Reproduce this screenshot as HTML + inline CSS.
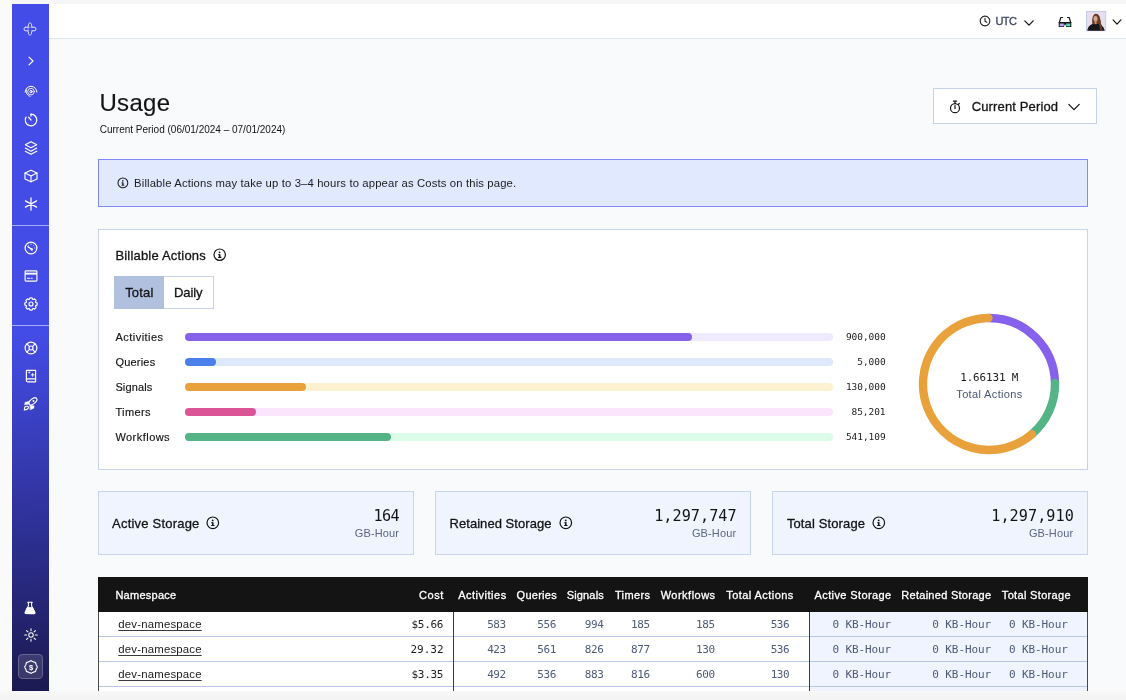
<!DOCTYPE html>
<html lang="en">
<head>
<meta charset="utf-8">
<title>Usage</title>
<style>
*{box-sizing:border-box;margin:0;padding:0}
html,body{width:1126px;height:700px;overflow:hidden}
body{background:#f8fafc;font-family:"Liberation Sans",sans-serif;color:#141414;position:relative}
.mono{font-family:"DejaVu Sans Mono","Liberation Mono",monospace}
#wrap{position:absolute;left:0;top:0;width:1126px;height:700px;will-change:transform}
.ic{position:absolute;overflow:visible}
.t{position:absolute;white-space:pre;line-height:1}
.md{-webkit-text-stroke:.3px currentColor}
.sm{-webkit-text-stroke:.15px currentColor}
#side{position:absolute;left:12px;top:4px;width:37px;height:687px;background:linear-gradient(176deg,#444ce7 0%,#444ce7 48%,#1b1950 100%)}
.sep{position:absolute;left:12px;width:37px;height:1px;background:#a9adf3}
#active{position:absolute;left:18.2px;top:654.2px;width:24.8px;height:24.6px;border-radius:4.5px;background:rgba(255,255,255,.13);border:1px solid rgba(255,255,255,.22)}
#top{position:absolute;left:49px;top:4px;width:1077px;height:35px;background:#fff;border-bottom:1px solid #e1e5ee}
#mt{position:absolute;left:0;top:0;width:1126px;height:4px;background:#f6f6f6}
#ml{position:absolute;left:0;top:0;width:12px;height:700px;background:#fafafa}
#mb{position:absolute;left:0;top:691px;width:1126px;height:9px;background:linear-gradient(#f8f8f8,#f3f3f3)}
#btn{position:absolute;left:933px;top:88px;width:164px;height:36px;background:#fff;border:1px solid #c5d2ea}
#banner{position:absolute;left:98px;top:159px;width:990px;height:48px;background:#e1e9ff;border:1px solid #7d8bf3}
#card{position:absolute;left:98px;top:229px;width:990px;height:241px;background:#fff;border:1px solid #c8d4ea}
#tabs{position:absolute;left:114px;top:276px;width:100px;height:33px;border:1px solid #c5d2ea;background:#fff}
#tabs i{position:absolute;left:-1px;top:-1px;width:50px;height:33px;background:#b1c0de}
.track{position:absolute;left:184.5px;width:648px;height:8px;border-radius:4px}
.fill{position:absolute;left:0;top:0;height:8px;border-radius:4px}
.scard{position:absolute;top:491px;width:316px;height:64px;background:#eff4fe;border:1px solid #c8d4ea}
#thead{position:absolute;left:98px;top:577px;width:990px;height:35px;background:#141414}
#tbody{position:absolute;left:98px;top:612px;width:990px;height:79px;background:#fff;border-left:1px solid #4a4a4a;border-right:1px solid #4a4a4a;overflow:hidden}
#stor{position:absolute;left:711px;top:0;width:279px;height:79px;background:#eff4fe}
.rl{position:absolute;left:0;width:990px;height:1px;background:#b7c6e4}
.vl{position:absolute;top:0;width:1px;height:79px;background:#3c3c3c}
.ns{text-decoration:underline;text-decoration-thickness:1px;text-decoration-color:#3a3a3a;text-underline-offset:1.5px;color:#1b1b1b}
.cost{right:682.4px;width:33.2px;overflow:hidden;text-align:right;direction:rtl;font-size:11px;color:#1b1b1b}
</style>
</head>
<body>
<div id="wrap">
<div id="mt"></div><div id="ml"></div><div id="mb"></div>
<div id="side"></div>
<div class="sep" style="top:225px"></div><div class="sep" style="top:325px"></div>
<div id="active"></div>
<svg class="ic" style="left:22.45px;top:21.10px" width="16" height="16" viewBox="-8.0 -8.0 16 16" fill="none" stroke="#fff" stroke-width="1.0" stroke-linecap="round" stroke-linejoin="round" ><ellipse rx="2.0" ry="6.2"/><rect x="-5.95" y="-1.75" width="11.9" height="3.5" rx="1.75" ry="1.75"/><ellipse rx="1.5" ry="5.7" fill="#444ce7" stroke="none"/><rect x="-5.45" y="-1.25" width="10.9" height="2.5" rx="1.25" fill="#444ce7" stroke="none"/><path d="M-1.9 -1.5C-2.1 -0.5 -2.1 0.5 -1.9 1.5M-1.6 -1.7H1.6" stroke-width="0.5" opacity=".75"/></svg>
<svg class="ic" style="left:23.40px;top:52.50px" width="16" height="16" viewBox="-8.0 -8.0 16 16" fill="none" stroke="#fff" stroke-width="1.1" stroke-linecap="round" stroke-linejoin="round" ><path d="M-2.0 -3.8L2.0 0L-2.0 3.8"/></svg>
<svg class="ic" style="left:22.60px;top:83.00px" width="16" height="16" viewBox="-8.0 -8.0 16 16" fill="none" stroke="#fff" stroke-width="1.0" stroke-linecap="round" stroke-linejoin="round" ><circle cy="0.6" r="1.15" stroke-width="1.0"/><circle cy="0.6" r="3.3" stroke-width="0.85"/><path d="M-0.85 5.43A4.9 4.9 0 0 1 -4.60 -1.08" stroke-width="0.85"/><path d="M-5.9 1.2A5.9 5.9 0 0 1 5.9 1.2" stroke-width="1.0"/></svg>
<svg class="ic" style="left:22.60px;top:111.80px" width="16" height="16" viewBox="-8.0 -8.0 16 16" fill="none" stroke="#fff" stroke-width="1.25" stroke-linecap="round" stroke-linejoin="round" ><path d="M0.00 -5.80A5.8 5.8 0 1 1 -5.02 -2.90"/><path d="M0 -5.8V-4.0"/><path d="M0 0L-2.5 -2.8"/></svg>
<svg class="ic" style="left:22.60px;top:139.60px" width="16" height="16" viewBox="-8.0 -8.0 16 16" fill="none" stroke="#fff" stroke-width="1.15" stroke-linecap="round" stroke-linejoin="round" ><path d="M0 -6.3L5.7 -3.2L0 -0.2L-5.7 -3.2Z"/><path d="M-5.7 0.1L0 3.2L5.7 0.1"/><path d="M-5.7 3.2L0 6.3L5.7 3.2"/></svg>
<svg class="ic" style="left:22.60px;top:167.80px" width="16" height="16" viewBox="-8.0 -8.0 16 16" fill="none" stroke="#fff" stroke-width="1.15" stroke-linecap="round" stroke-linejoin="round" ><path d="M0 -5.8L6 -3V3L0 5.8L-6 3V-3Z"/><path d="M-6 -3L0 -0.1L6 -3M0 -0.1V5.8"/></svg>
<svg class="ic" style="left:22.60px;top:195.80px" width="16" height="16" viewBox="-8.0 -8.0 16 16" fill="none" stroke="#fff" stroke-width="1.25" stroke-linecap="round" stroke-linejoin="round" ><path d="M0 -6.2V6.2M-5.6 -3.1L5.6 3.1M-5.6 3.1L5.6 -3.1"/></svg>
<svg class="ic" style="left:22.60px;top:239.80px" width="16" height="16" viewBox="-8.0 -8.0 16 16" fill="none" stroke="#fff" stroke-width="1.2" stroke-linecap="round" stroke-linejoin="round" ><circle r="5.9"/><path d="M0.9 1.5L-3.0 -1.3" stroke-width="1.4"/><circle cx="0.8" cy="1.5" r="1.15" fill="#fff" stroke="none"/><path d="M0 -3.9V-3.7M2.7 -2.8L2.6 -2.7M3.9 0H3.7M-2.7 -2.8L-2.6 -2.7" stroke-width="1"/></svg>
<svg class="ic" style="left:22.60px;top:267.80px" width="16" height="16" viewBox="-8.0 -8.0 16 16" fill="none" stroke="#fff" stroke-width="1.15" stroke-linecap="round" stroke-linejoin="round" ><rect x="-5.9" y="-5.1" width="11.8" height="10.2" rx="0.8"/><rect x="-5.9" y="-3.3" width="11.8" height="1.9" fill="#fff" stroke="none"/><path d="M-3.6 2.3H-1.4M0.2 2.3H1.2" stroke-width="1.1"/></svg>
<svg class="ic" style="left:22.60px;top:296.00px" width="16" height="16" viewBox="-8.0 -8.0 16 16" fill="none" stroke="#fff" stroke-width="1.15" stroke-linecap="round" stroke-linejoin="round" ><path d="M-1.55 -4.76L-1.09 -6.16L1.09 -6.16L1.55 -4.76L2.27 -4.46L3.58 -5.12L5.12 -3.58L4.46 -2.27L4.76 -1.55L6.16 -1.09L6.16 1.09L4.76 1.55L4.46 2.27L5.12 3.58L3.58 5.12L2.27 4.46L1.55 4.76L1.09 6.16L-1.09 6.16L-1.55 4.76L-2.27 4.46L-3.58 5.12L-5.12 3.58L-4.46 2.27L-4.76 1.55L-6.16 1.09L-6.16 -1.09L-4.76 -1.55L-4.46 -2.27L-5.12 -3.58L-3.58 -5.12L-2.27 -4.46Z"/><circle r="2"/></svg>
<svg class="ic" style="left:22.60px;top:339.80px" width="16" height="16" viewBox="-8.0 -8.0 16 16" fill="none" stroke="#fff" stroke-width="1.2" stroke-linecap="round" stroke-linejoin="round" ><circle r="5.9"/><circle r="2.0"/><path d="M-4.17 -4.17L-1.41 -1.41M4.17 -4.17L1.41 -1.41M-4.17 4.17L-1.41 1.41M4.17 4.17L1.41 1.41"/></svg>
<svg class="ic" style="left:22.60px;top:368.00px" width="16" height="16" viewBox="-8.0 -8.0 16 16" fill="none" stroke="#fff" stroke-width="1.15" stroke-linecap="round" stroke-linejoin="round" ><path d="M-4.6 -5.7H4.6V5.8H-3.2A1.4 1.4 0 0 1 -4.6 4.4Z"/><path d="M-4.6 4.3A1.4 1.4 0 0 1 -3.2 2.9H4.6" /><path d="M1.7 -2.5V0.3M0.3 -1.1H3.1" stroke-width="0.95"/><path d="M-1.7 -4.1V-3M-2.25 -3.55H-1.15" stroke-width="0.8"/></svg>
<svg class="ic" style="left:23.00px;top:396.00px" width="16" height="16" viewBox="-8.0 -8.0 16 16" fill="none" stroke="#fff" stroke-width="1" stroke-linecap="round" stroke-linejoin="round" ><path d="M-5.7 -1.7L-1.2 -2.8L-1.6 0L-6.3 0.7Z" fill="#fff" stroke-width="0.5"/><path d="M-0.9 1.3L3.2 1.9L2.7 4.3L-0.6 5.8Z" fill="#fff" stroke-width="0.5"/><ellipse cx="2.0" cy="-2.7" rx="4.6" ry="2.45" transform="rotate(-40 2.0 -2.7)" fill="#3c42c9" stroke-width="1.15"/><circle cx="2.5" cy="-2.9" r="1.0" fill="#fff" stroke="none"/><path d="M-6.7 5.9L-6.2 3C-5 1.9 -3 2 -2.5 2.9C-2.1 4.5 -4 5.9 -6.7 5.9Z" fill="#3c42c9" stroke-width="1.1"/></svg>
<svg class="ic" style="left:22.45px;top:599.50px" width="16" height="16" viewBox="-8.0 -8.0 16 16" fill="none" stroke="#fff" stroke-width="1.1" stroke-linecap="round" stroke-linejoin="round" ><path d="M-2.3 -5.8H2.3" stroke-width="1.15"/><path d="M-1.6 -5.8V-1.9L-4.8 4.3A0.9 0.9 0 0 0 -4 5.6H4A0.9 0.9 0 0 0 4.8 4.3L1.6 -1.9V-5.8" stroke-width="1.05"/><path d="M-2.5 -0.4H2.5L4.8 4.3A0.9 0.9 0 0 1 4 5.6H-4A0.9 0.9 0 0 1 -4.8 4.3Z" fill="#fff" stroke-width="0.8"/></svg>
<svg class="ic" style="left:22.60px;top:627.40px" width="16" height="16" viewBox="-8.0 -8.0 16 16" fill="none" stroke="#fff" stroke-width="1.05" stroke-linecap="round" stroke-linejoin="round" ><circle r="2.2" stroke-width="1.1"/><path d="M4.30 0.00L6.30 0.00M3.04 3.04L4.45 4.45M0.00 4.30L0.00 6.30M-3.04 3.04L-4.45 4.45M-4.30 0.00L-6.30 0.00M-3.04 -3.04L-4.45 -4.45M-0.00 -4.30L-0.00 -6.30M3.04 -3.04L4.45 -4.45"/></svg>
<svg class="ic" style="left:22.60px;top:658.50px" width="16" height="16" viewBox="-8.0 -8.0 16 16" fill="none" stroke="#fff" stroke-width="1.15" stroke-linecap="round" stroke-linejoin="round" ><path d="M6.30 0.00L6.13 0.40L5.95 0.78L5.76 1.15L5.58 1.50L5.42 1.84L5.27 2.18L5.13 2.53L5.01 2.89L4.89 3.26L4.76 3.65L4.62 4.05L4.45 4.45L4.05 4.62L3.65 4.76L3.26 4.89L2.89 5.01L2.53 5.13L2.18 5.27L1.84 5.42L1.50 5.58L1.15 5.76L0.78 5.95L0.40 6.13L0.00 6.30L-0.40 6.13L-0.78 5.95L-1.15 5.76L-1.50 5.58L-1.84 5.42L-2.18 5.27L-2.53 5.13L-2.89 5.01L-3.26 4.89L-3.65 4.76L-4.05 4.62L-4.45 4.45L-4.62 4.05L-4.76 3.65L-4.89 3.26L-5.01 2.89L-5.13 2.53L-5.27 2.18L-5.42 1.84L-5.58 1.50L-5.76 1.15L-5.95 0.78L-6.13 0.40L-6.30 0.00L-6.13 -0.40L-5.95 -0.78L-5.76 -1.15L-5.58 -1.50L-5.42 -1.84L-5.27 -2.18L-5.13 -2.53L-5.01 -2.89L-4.89 -3.26L-4.76 -3.65L-4.62 -4.05L-4.45 -4.45L-4.05 -4.62L-3.65 -4.76L-3.26 -4.89L-2.89 -5.01L-2.53 -5.13L-2.18 -5.27L-1.84 -5.42L-1.50 -5.58L-1.15 -5.76L-0.78 -5.95L-0.40 -6.13L-0.00 -6.30L0.40 -6.13L0.78 -5.95L1.15 -5.76L1.50 -5.58L1.84 -5.42L2.18 -5.27L2.53 -5.13L2.89 -5.01L3.26 -4.89L3.65 -4.76L4.05 -4.62L4.45 -4.45L4.62 -4.05L4.76 -3.65L4.89 -3.26L5.01 -2.89L5.13 -2.53L5.27 -2.18L5.42 -1.84L5.58 -1.50L5.76 -1.15L5.95 -0.78L6.13 -0.40L6.30 -0.00Z"/><text x="0" y="2.75" text-anchor="middle" font-family="Liberation Sans, sans-serif" font-size="7.6" font-weight="700" fill="#fff" stroke="none">$</text></svg>
<div id="top"></div>
<svg class="ic" style="left:976.5px;top:13.4px" width="16" height="16" viewBox="-8 -8 16 16" fill="none" stroke="#1f1f1f" stroke-width="1.1" stroke-linecap="round" stroke-linejoin="round"><circle r="4.85"/><path d="M0 -2.8V0.2L1.9 1.3"/></svg>
<div class="t md" style="left:995.50px;top:16.0px;font-size:11px;letter-spacing:-0.613px;color:#3c4663;">UTC</div>
<svg class="ic" style="left:1021.0999999999999px;top:14.5px" width="16" height="16" viewBox="-8 -8 16 16" fill="none" stroke="#141414" stroke-width="1.25" stroke-linecap="round" stroke-linejoin="round"><path d="M-4.2 -2.15L0 2.15L4.2 -2.15"/></svg>
<svg class="ic" style="left:1057.15px;top:13.9px" width="16" height="16" viewBox="-8 -8 16 16" fill="none" stroke="#141414" stroke-width="1.2" stroke-linejoin="round" stroke-linecap="round"><path d="M-2.5 -4.5H-4.2L-5.7 0.6M2.5 -4.5H4.2L5.7 0.6"/><path d="M-6.3 0H6.3V5H1L0.5 2.6H-0.5L-1 5H-6.3Z" fill="#141414" stroke="none"/><rect x="-5.3" y="1.5" width="4.1" height="2.8" fill="#b7a2f6" stroke="none"/><rect x="1.2" y="1.5" width="4.1" height="2.8" fill="#56d3bd" stroke="none"/></svg>
<svg class="ic" style="left:1086px;top:11.2px" width="20.2" height="20.2" viewBox="0 0 21 21"><rect x="0.5" y="0.5" width="20" height="20" fill="#e6deef" stroke="#c3cce6"/><path d="M6.6 13.2C6 8 7 3 10.2 2.8C13.6 2.8 14.6 6.5 15 10C15.4 13.5 16.6 16.5 17 20H5.4C5.8 17.5 6.9 16 6.6 13.2Z" fill="#6a3d28"/><ellipse cx="9.9" cy="8" rx="2.1" ry="2.9" fill="#d8a88b"/><rect x="9" y="10" width="2" height="3.4" fill="#c99678"/><path d="M1.4 20.5C1.8 16 4.6 13.9 8.2 13.2C9.4 14.2 10.8 14.2 11.8 13.2C15.4 13.9 18.8 16 19.4 20.5Z" fill="#17181c"/><path d="M12 5.5C13.2 8 12.8 11 13.6 14C14.2 16.4 14.4 18.4 14.6 20.3H17C16.6 16.5 15.4 13.5 15 10C14.8 8 14.2 6 13 4.6Z" fill="#6a3d28"/></svg>
<svg class="ic" style="left:1108.6px;top:14.2px" width="16" height="16" viewBox="-8 -8 16 16" fill="none" stroke="#141414" stroke-width="1.2" stroke-linecap="round" stroke-linejoin="round"><path d="M-3.9 -2.05L0 2.05L3.9 -2.05"/></svg>
<div class="t sm" style="left:99.50px;top:91.2px;font-size:24px;letter-spacing:0.281px;">Usage</div>
<div class="t" style="left:99.70px;top:124.6px;font-size:10px;">Current Period (06/01/2024 – 07/01/2024)</div>
<div id="btn"></div>
<svg class="ic" style="left:947.1px;top:98.5px" width="16" height="16" viewBox="-8 -8 16 16" fill="none" stroke="#1a1a1a" stroke-width="1.25" stroke-linecap="round" stroke-linejoin="round"><circle cy="1.2" r="4.5"/><path d="M-1.6 -6H1.6M0 -5.8V-3.4M0 -1.4V1.4M3.4 -2.6L4.3 -3.5"/></svg>
<div class="t md" style="left:971.70px;top:100.2px;font-size:13px;letter-spacing:0.138px;">Current Period</div>
<svg class="ic" style="left:1066.3px;top:99.1px" width="16" height="16" viewBox="-8 -8 16 16" fill="none" stroke="#141414" stroke-width="1.3" stroke-linecap="round" stroke-linejoin="round"><path d="M-5.2 -2.6L0 2.6L5.2 -2.6"/></svg>
<div id="banner"></div>
<svg class="ic" style="left:116.10px;top:176.30px" width="13.8" height="13.8" viewBox="-6.9 -6.9 13.8 13.8" fill="none" stroke="#1a1a1a" stroke-width="1.05" stroke-linecap="round"><circle r="4.9"/><g transform="scale(0.860)"><path d="M0 -0.5V2.7" stroke-width="1.5" stroke-linecap="butt"/><path d="M-1.6 0H0M-1.6 2.7H1.7" stroke-width="1.05" stroke-linecap="butt"/><circle cx="-0.1" cy="-2.35" r="0.9" fill="#1a1a1a" stroke="none"/></g></svg>
<div class="t" style="left:134.10px;top:177.5px;font-size:11.3px;letter-spacing:0.132px;color:#1c1c1c;">Billable Actions may take up to 3–4 hours to appear as Costs on this page.</div>
<div id="card"></div>
<div class="t md" style="left:115.40px;top:248.9px;font-size:13px;letter-spacing:0.193px;">Billable Actions</div>
<svg class="ic" style="left:212.00px;top:247.10px" width="15.4" height="15.4" viewBox="-7.7 -7.7 15.4 15.4" fill="none" stroke="#141414" stroke-width="1.2" stroke-linecap="round"><circle r="5.7"/><g transform="scale(1.000)"><path d="M0 -0.5V2.7" stroke-width="1.5" stroke-linecap="butt"/><path d="M-1.6 0H0M-1.6 2.7H1.7" stroke-width="1.05" stroke-linecap="butt"/><circle cx="-0.1" cy="-2.35" r="0.9" fill="#141414" stroke="none"/></g></svg>
<div id="tabs"><i></i></div>
<div class="t md" style="left:125.20px;top:285.8px;font-size:13px;letter-spacing:0.175px;">Total</div>
<div class="t md" style="left:174.00px;top:285.8px;font-size:13px;letter-spacing:-0.119px;">Daily</div>
<div class="t sm" style="left:115.40px;top:332.0px;font-size:11px;letter-spacing:0.481px;">Activities</div><div class="track" style="top:333px;background:#efeafd"><div class="fill" style="width:507.7px;background:#8561ec"></div></div><div class="t mono" style="left:845.90px;top:332.0px;font-size:9.5px;color:#1c1c1c;letter-spacing:-.05px;">900,000</div>
<div class="t sm" style="left:115.40px;top:357.0px;font-size:11px;letter-spacing:0.217px;">Queries</div><div class="track" style="top:358px;background:#dde8fb"><div class="fill" style="width:31.2px;background:#4b80ea"></div></div><div class="t mono" style="left:857.27px;top:357.0px;font-size:9.5px;color:#1c1c1c;letter-spacing:-.05px;">5,000</div>
<div class="t sm" style="left:115.40px;top:382.0px;font-size:11px;letter-spacing:0.146px;">Signals</div><div class="track" style="top:383px;background:#fdf2cf"><div class="fill" style="width:121.7px;background:#e8a13b"></div></div><div class="t mono" style="left:845.90px;top:382.0px;font-size:9.5px;color:#1c1c1c;letter-spacing:-.05px;">130,000</div>
<div class="t sm" style="left:115.40px;top:407.0px;font-size:11px;letter-spacing:0.370px;">Timers</div><div class="track" style="top:408px;background:#fbe5fc"><div class="fill" style="width:71.7px;background:#db5496"></div></div><div class="t mono" style="left:851.52px;top:407.0px;font-size:9.5px;color:#1c1c1c;letter-spacing:-.05px;">85,201</div>
<div class="t sm" style="left:115.40px;top:432.0px;font-size:11px;letter-spacing:0.462px;">Workflows</div><div class="track" style="top:433px;background:#dcfcea"><div class="fill" style="width:206.3px;background:#54b486"></div></div><div class="t mono" style="left:845.90px;top:432.0px;font-size:9.5px;color:#1c1c1c;letter-spacing:-.05px;">541,109</div>

<svg class="ic" style="left:909.2px;top:303.8px" width="160" height="160" viewBox="-80 -80 160 160" fill="none" stroke-width="8.4" stroke-linecap="round"><path d="M0.00 -66.00A66 66 0 0 1 65.99 -1.15" stroke="#8561ec"/><path d="M65.99 -1.15A66 66 0 0 1 42.86 50.19" stroke="#54b486"/><path d="M42.86 50.19A66 66 0 1 1 -0.58 -66.00" stroke="#e8a13b"/></svg>
<div class="t mono" style="left:960.20px;top:373.2px;font-size:10.9px;letter-spacing:-0.100px;color:#1c1c1c;">1.66131 M</div>
<div class="t" style="left:956.30px;top:389.0px;font-size:11px;letter-spacing:0.354px;color:#4a5574;">Total Actions</div>
<div class="scard" style="left:98px"></div><div class="t md" style="left:112.10px;top:517.0px;font-size:13px;letter-spacing:0.208px;">Active Storage</div><svg class="ic" style="left:204.70px;top:515.20px" width="15.6" height="15.6" viewBox="-7.8 -7.8 15.6 15.6" fill="none" stroke="#141414" stroke-width="1.2" stroke-linecap="round"><circle r="5.8"/><g transform="scale(1.018)"><path d="M0 -0.5V2.7" stroke-width="1.5" stroke-linecap="butt"/><path d="M-1.6 0H0M-1.6 2.7H1.7" stroke-width="1.05" stroke-linecap="butt"/><circle cx="-0.1" cy="-2.35" r="0.9" fill="#141414" stroke="none"/></g></svg><div class="t mono" style="left:373.60px;top:509.3px;font-size:15.2px;letter-spacing:-0.700px;">164</div><div class="t" style="left:354.70px;top:528.2px;font-size:11px;letter-spacing:0.154px;color:#5a6684;">GB-Hour</div>
<div class="scard" style="left:435px"></div><div class="t md" style="left:449.50px;top:517.0px;font-size:13px;letter-spacing:0.050px;">Retained Storage</div><svg class="ic" style="left:557.55px;top:515.20px" width="15.6" height="15.6" viewBox="-7.8 -7.8 15.6 15.6" fill="none" stroke="#141414" stroke-width="1.2" stroke-linecap="round"><circle r="5.8"/><g transform="scale(1.018)"><path d="M0 -0.5V2.7" stroke-width="1.5" stroke-linecap="butt"/><path d="M-1.6 0H0M-1.6 2.7H1.7" stroke-width="1.05" stroke-linecap="butt"/><circle cx="-0.1" cy="-2.35" r="0.9" fill="#141414" stroke="none"/></g></svg><div class="t mono" style="left:654.20px;top:509.3px;font-size:15.2px;letter-spacing:0.016px;">1,297,747</div><div class="t" style="left:691.90px;top:528.2px;font-size:11px;letter-spacing:0.138px;color:#5a6684;">GB-Hour</div>
<div class="scard" style="left:772px"></div><div class="t md" style="left:786.90px;top:517.0px;font-size:13px;letter-spacing:0.123px;">Total Storage</div><svg class="ic" style="left:870.90px;top:515.20px" width="15.6" height="15.6" viewBox="-7.8 -7.8 15.6 15.6" fill="none" stroke="#141414" stroke-width="1.2" stroke-linecap="round"><circle r="5.8"/><g transform="scale(1.018)"><path d="M0 -0.5V2.7" stroke-width="1.5" stroke-linecap="butt"/><path d="M-1.6 0H0M-1.6 2.7H1.7" stroke-width="1.05" stroke-linecap="butt"/><circle cx="-0.1" cy="-2.35" r="0.9" fill="#141414" stroke="none"/></g></svg><div class="t mono" style="left:991.20px;top:509.3px;font-size:15.2px;letter-spacing:0.053px;">1,297,910</div><div class="t" style="left:1028.90px;top:528.2px;font-size:11px;letter-spacing:0.137px;color:#5a6684;">GB-Hour</div>

<div id="thead"></div><div class="t md" style="left:115.40px;top:589.7px;font-size:11px;letter-spacing:0.269px;color:#fff;">Namespace</div><div class="t md" style="left:419.00px;top:589.7px;font-size:11px;letter-spacing:0.558px;color:#fff;">Cost</div><div class="t md" style="left:458.20px;top:589.7px;font-size:11px;letter-spacing:0.514px;color:#fff;">Activities</div><div class="t md" style="left:516.60px;top:589.7px;font-size:11px;letter-spacing:0.267px;color:#fff;">Queries</div><div class="t md" style="left:566.70px;top:589.7px;font-size:11px;letter-spacing:0.162px;color:#fff;">Signals</div><div class="t md" style="left:614.90px;top:589.7px;font-size:11px;letter-spacing:0.390px;color:#fff;">Timers</div><div class="t md" style="left:660.70px;top:589.7px;font-size:11px;letter-spacing:0.487px;color:#fff;">Workflows</div><div class="t md" style="left:726.20px;top:589.7px;font-size:11px;letter-spacing:0.446px;color:#fff;">Total Actions</div><div class="t md" style="left:814.50px;top:589.7px;font-size:11px;letter-spacing:0.400px;color:#fff;">Active Storage</div><div class="t md" style="left:901.30px;top:589.7px;font-size:11px;letter-spacing:0.278px;color:#fff;">Retained Storage</div><div class="t md" style="left:1001.80px;top:589.7px;font-size:11px;letter-spacing:0.335px;color:#fff;">Total Storage</div>
<div id="tbody"><div id="stor"></div><div class="rl" style="top:24px"></div><div class="rl" style="top:49px"></div><div class="rl" style="top:74px"></div><div class="rl" style="top:99px"></div><div class="vl" style="left:354px"></div><div class="vl" style="left:710px"></div></div>
<div class="t ns" style="left:118.30px;top:619.4px;font-size:11.4px;letter-spacing:0.181px;">dev-namespace</div><div class="t mono" style="left:411.50px;top:618.7px;font-size:11px;letter-spacing:-0.281px;color:#1b1b1b;">$5.66</div><div class="t mono" style="left:487.20px;top:618.7px;font-size:11px;letter-spacing:-0.438px;color:#4e5a79;">583</div><div class="t mono" style="left:537.30px;top:618.7px;font-size:11px;letter-spacing:-0.438px;color:#4e5a79;">556</div><div class="t mono" style="left:584.80px;top:618.7px;font-size:11px;letter-spacing:-0.438px;color:#4e5a79;">994</div><div class="t mono" style="left:631.10px;top:618.7px;font-size:11px;letter-spacing:-0.438px;color:#4e5a79;">185</div><div class="t mono" style="left:696.10px;top:618.7px;font-size:11px;letter-spacing:-0.438px;color:#4e5a79;">185</div><div class="t mono" style="left:770.70px;top:618.7px;font-size:11px;letter-spacing:-0.438px;color:#4e5a79;">536</div><div class="t mono" style="left:832.40px;top:618.7px;font-size:11px;letter-spacing:-0.103px;color:#4e5a79;">0 KB-Hour</div><div class="t mono" style="left:932.30px;top:618.7px;font-size:11px;letter-spacing:-0.103px;color:#4e5a79;">0 KB-Hour</div><div class="t mono" style="left:1009.00px;top:618.7px;font-size:11px;letter-spacing:-0.103px;color:#4e5a79;">0 KB-Hour</div>
<div class="t ns" style="left:118.30px;top:644.4px;font-size:11.4px;letter-spacing:0.181px;">dev-namespace</div><div class="t mono cost" style="top:643.7px">$29.32</div><div class="t mono" style="left:487.20px;top:643.7px;font-size:11px;letter-spacing:-0.438px;color:#4e5a79;">423</div><div class="t mono" style="left:537.30px;top:643.7px;font-size:11px;letter-spacing:-0.438px;color:#4e5a79;">561</div><div class="t mono" style="left:584.80px;top:643.7px;font-size:11px;letter-spacing:-0.438px;color:#4e5a79;">826</div><div class="t mono" style="left:631.10px;top:643.7px;font-size:11px;letter-spacing:-0.438px;color:#4e5a79;">877</div><div class="t mono" style="left:696.10px;top:643.7px;font-size:11px;letter-spacing:-0.438px;color:#4e5a79;">130</div><div class="t mono" style="left:770.70px;top:643.7px;font-size:11px;letter-spacing:-0.438px;color:#4e5a79;">536</div><div class="t mono" style="left:832.40px;top:643.7px;font-size:11px;letter-spacing:-0.103px;color:#4e5a79;">0 KB-Hour</div><div class="t mono" style="left:932.30px;top:643.7px;font-size:11px;letter-spacing:-0.103px;color:#4e5a79;">0 KB-Hour</div><div class="t mono" style="left:1009.00px;top:643.7px;font-size:11px;letter-spacing:-0.103px;color:#4e5a79;">0 KB-Hour</div>
<div class="t ns" style="left:118.30px;top:669.4px;font-size:11.4px;letter-spacing:0.181px;">dev-namespace</div><div class="t mono" style="left:411.50px;top:668.7px;font-size:11px;letter-spacing:-0.281px;color:#1b1b1b;">$3.35</div><div class="t mono" style="left:487.20px;top:668.7px;font-size:11px;letter-spacing:-0.438px;color:#4e5a79;">492</div><div class="t mono" style="left:537.30px;top:668.7px;font-size:11px;letter-spacing:-0.438px;color:#4e5a79;">536</div><div class="t mono" style="left:584.80px;top:668.7px;font-size:11px;letter-spacing:-0.438px;color:#4e5a79;">883</div><div class="t mono" style="left:631.10px;top:668.7px;font-size:11px;letter-spacing:-0.438px;color:#4e5a79;">816</div><div class="t mono" style="left:696.10px;top:668.7px;font-size:11px;letter-spacing:-0.438px;color:#4e5a79;">600</div><div class="t mono" style="left:770.70px;top:668.7px;font-size:11px;letter-spacing:-0.438px;color:#4e5a79;">130</div><div class="t mono" style="left:832.40px;top:668.7px;font-size:11px;letter-spacing:-0.103px;color:#4e5a79;">0 KB-Hour</div><div class="t mono" style="left:932.30px;top:668.7px;font-size:11px;letter-spacing:-0.103px;color:#4e5a79;">0 KB-Hour</div><div class="t mono" style="left:1009.00px;top:668.7px;font-size:11px;letter-spacing:-0.103px;color:#4e5a79;">0 KB-Hour</div>

</div>
</body>
</html>
